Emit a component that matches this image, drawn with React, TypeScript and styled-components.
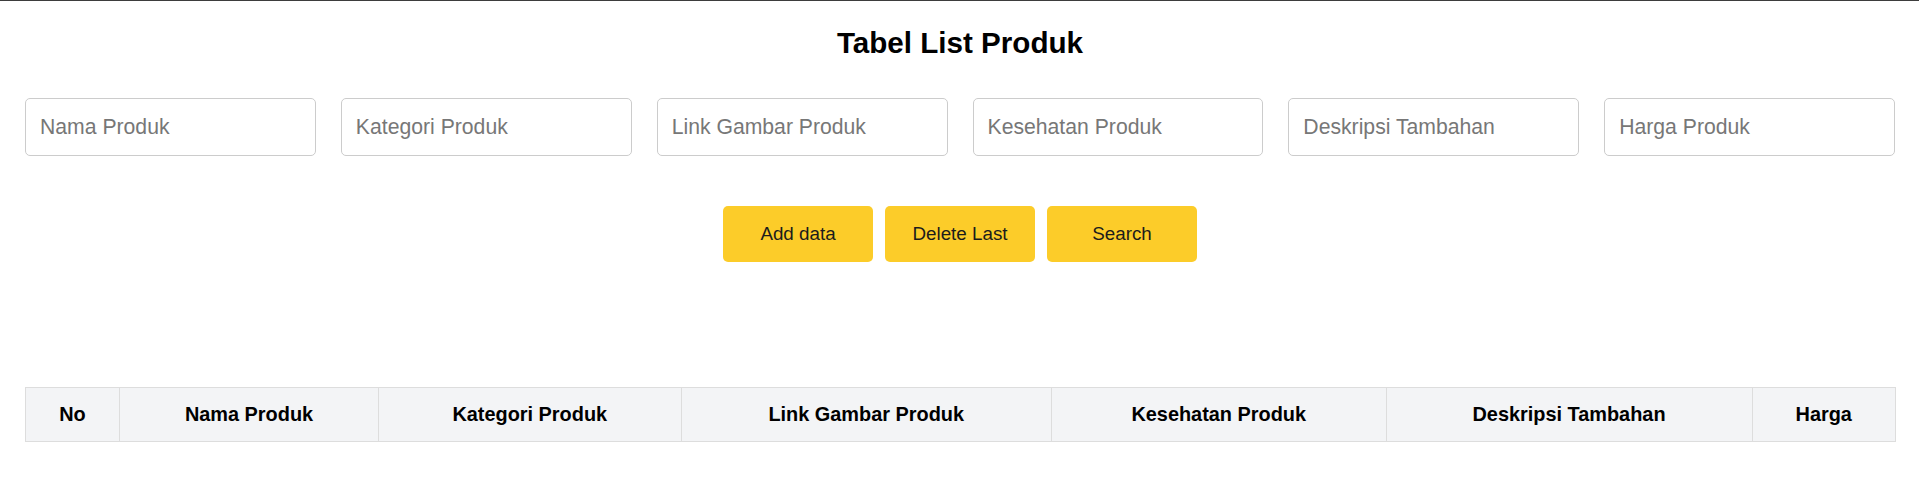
import styled, { createGlobalStyle } from 'styled-components';

const GlobalStyle = createGlobalStyle`
  * {
    box-sizing: border-box;
  }
  body {
    margin: 0;
    background: #fff;
    font-family: 'Liberation Sans', Arial, sans-serif;
    color: #000;
  }
`;

const fields = [
  'Nama Produk',
  'Kategori Produk',
  'Link Gambar Produk',
  'Kesehatan Produk',
  'Deskripsi Tambahan',
  'Harga Produk',
];

const columns = [
  { label: 'No', width: 94 },
  { label: 'Nama Produk', width: 259 },
  { label: 'Kategori Produk', width: 302.5 },
  { label: 'Link Gambar Produk', width: 370.5 },
  { label: 'Kesehatan Produk', width: 334.5 },
  { label: 'Deskripsi Tambahan', width: 366 },
  { label: 'Harga', width: 143.5 },
];

export default function App() {
  return (
    <Page>
      <GlobalStyle />
      <Title>Tabel List Produk</Title>

      <Form>
        {fields.map((f) => (
          <Input key={f} type="text" placeholder={f} />
        ))}
      </Form>

      <Actions>
        <Button>Add data</Button>
        <Button>Delete Last</Button>
        <Button>Search</Button>
      </Actions>

      <Table>
        <colgroup>
          {columns.map((c) => (
            <Col key={c.label} $width={c.width} />
          ))}
        </colgroup>
        <thead>
          <tr>
            {columns.map((c) => (
              <Th key={c.label}>{c.label}</Th>
            ))}
          </tr>
        </thead>
        <tbody />
      </Table>
    </Page>
  );
}

const Page = styled.div`
  min-height: 488px;
  border-top: 1px solid #3d3d3d;
  padding: 0 24px 40px 25px;
`;

const Title = styled.h1`
  margin: 25px 0 0;
  font-size: 29.6px;
  line-height: 34px;
  font-weight: 700;
  text-align: center;
`;

const Form = styled.div`
  display: grid;
  grid-template-columns: repeat(6, 1fr);
  gap: 25px;
  margin-top: 38px;
`;

const Input = styled.input`
  height: 58px;
  width: 100%;
  padding: 0 14px;
  border: 1px solid #cccccc;
  border-radius: 5px;
  font-family: 'Liberation Sans', Arial, sans-serif;
  font-size: 21.2px;
  color: #222;
  outline: none;

  &::placeholder {
    color: #777777;
  }
`;

const Actions = styled.div`
  display: flex;
  justify-content: center;
  gap: 12px;
  margin-top: 50px;
`;

const Button = styled.button`
  width: 150px;
  height: 56px;
  border: none;
  border-radius: 5px;
  background: #fccc29;
  color: #1c1c1c;
  font-family: 'Liberation Sans', Arial, sans-serif;
  font-size: 18.8px;
  cursor: pointer;
`;

const Table = styled.table`
  width: 100%;
  margin-top: 125px;
  border-collapse: collapse;
  table-layout: fixed;
`;

const Col = styled.col<{ $width: number }>`
  width: ${(p) => p.$width}px;
`;

const Th = styled.th`
  height: 54px;
  padding: 0 8px;
  background: #f3f4f6;
  border: 1px solid #dddddd;
  font-size: 19.9px;
  font-weight: 700;
  text-align: center;
  white-space: nowrap;
`;
